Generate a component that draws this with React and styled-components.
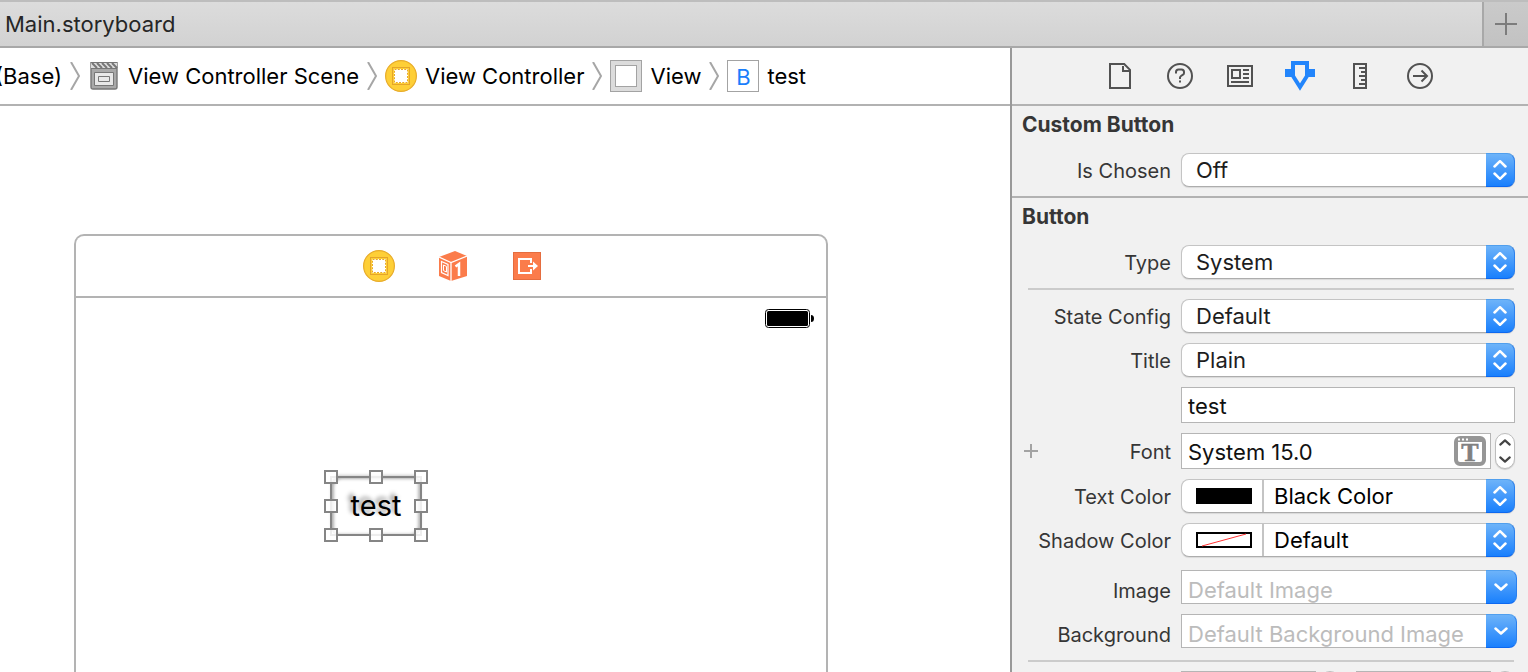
import React from "react";
import styled, { createGlobalStyle, css } from "styled-components";

const GlobalStyle = createGlobalStyle`
  *, *::before, *::after { box-sizing: border-box; }
  body { margin: 0; background: #fff; font-family: Inter, "Liberation Sans", sans-serif; color: #000; }
  button, input, select { font: inherit; color: inherit; margin: 0; }
  svg { display: block; }
`;

const Shell = styled.div`
  display: flex;
  flex-direction: column;
  height: 100vh;
  overflow: hidden;
`;

const TitleBar = styled.header`
  display: flex;
  flex: none;
  height: 48px;
  border-top: 2px solid #bdbdbd;
  border-bottom: 2px solid #a8a8a8;
  background: linear-gradient(#dcdcdc, #d2d2d2);
`;

const DocumentTitle = styled.h1`
  flex: 1;
  margin: 0;
  padding-left: 5px;
  font-size: 22px;
  font-weight: 400;
  line-height: 44px;
  color: #262626;
`;

const AddTabButton = styled.button`
  display: grid;
  place-items: center;
  width: 46px;
  padding: 0;
  border: 0;
  border-left: 2px solid #a8a8a8;
  background: linear-gradient(#cacaca, #c2c2c2);
`;

const Workspace = styled.div`
  display: flex;
  flex: 1;
  min-height: 0;
`;

const Editor = styled.main`
  display: flex;
  flex: 1;
  flex-direction: column;
  min-width: 0;
  overflow: hidden;
`;

const PathBar = styled.nav`
  display: flex;
  flex: none;
  align-items: center;
  gap: 8px;
  height: 58px;
  margin-left: -5px;
  border-bottom: 2px solid #b2b2b2;
  white-space: nowrap;
`;

const Crumb = styled.a`
  display: flex;
  align-items: center;
  gap: 8px;
  font-size: 22px;
  line-height: 28px;
  color: #000;
  text-decoration: none;
`;

const IconSlot = styled.span`
  display: grid;
  place-items: center;
  width: 32px;
  height: 32px;
`;

const ButtonBadge = styled.span`
  width: 32px;
  height: 32px;
  border: 1px solid #a3a3a3;
  font-size: 22px;
  line-height: 32px;
  text-align: center;
  color: #1a7efb;
`;

const Canvas = styled.section`
  display: flex;
  flex: 1;
  min-height: 0;
  padding: 128px 182px 0 74px;
`;

const Scene = styled.div`
  display: flex;
  flex: 1;
  flex-direction: column;
  border: 2px solid #b3b3b3;
  border-bottom: 0;
  border-radius: 10px 10px 0 0;
`;

const SceneDock = styled.div`
  display: flex;
  align-items: center;
  justify-content: center;
  gap: 42px;
  height: 62px;
  padding-left: 4px;
  border-bottom: 2px solid #b3b3b3;
`;

const SceneView = styled.div`
  position: relative;
  flex: 1;
  padding: 11px 12px;
`;

const StatusBar = styled.div`
  display: flex;
  justify-content: flex-end;
`;

const SelectedItem = styled.div`
  position: absolute;
  left: 255px;
  top: 179px;
  width: 90px;
  height: 58px;
  outline: 2px solid #858585;
  outline-offset: -1px;
`;

const CanvasButton = styled.button`
  width: 100%;
  height: 100%;
  padding: 0;
  border: 0;
  border-radius: 8px;
  background: #fff;
  box-shadow: inset 3px 2px 3px #b0b0b0, inset -3px -1px 3px #b8b8b8, 0 -2px 3px #ccc;
  font-size: 29px;
  line-height: 32px;
  text-shadow: -3px -3px 4px #999;
`;

const Handle = styled.span`
  position: absolute;
  left: ${(p) => p.$x};
  top: ${(p) => p.$y};
  width: 14px;
  height: 14px;
  margin: -7px;
  border: 2px solid #858585;
  background: rgba(255, 255, 255, 0.85);
`;

const Inspector = styled.aside`
  flex: none;
  width: 518px;
  border-left: 2px solid #999;
  background: #f1f1f1;
  overflow: hidden;
`;

const InspectorTabs = styled.div`
  display: flex;
  justify-content: center;
  height: 58px;
  border-bottom: 2px solid #b2b2b2;
`;

const TabButton = styled.button`
  display: grid;
  place-items: center;
  width: 60px;
  padding: 0;
  border: 0;
  background: none;
  color: ${(p) => (p.$active ? "#2285fb" : "#525252")};
`;

const Section = styled.section`
  display: flex;
  flex-direction: column;
  gap: 10px;
  padding: 7px 13px 9px 0;
  border-bottom: 2px solid #b2b2b2;
`;

const SectionTitle = styled.h2`
  margin: 0 0 6px;
  padding-left: 10px;
  font-size: 21px;
  font-weight: 700;
  line-height: 24px;
  color: #363636;
`;

const Divider = styled.hr`
  width: 486px;
  height: 2px;
  margin: -1px 0 -1px 16px;
  border: 0;
  background: #cbcbcb;
`;

const Row = styled.div`
  display: grid;
  grid-template-columns: 159px 1fr;
  column-gap: 10px;
  align-items: ${(p) => (p.$low ? "end" : "center")};
  margin: ${(p) => p.$margin || "0"};
`;

const LabelCell = styled.div`
  display: flex;
  align-items: center;
  justify-content: flex-end;
  padding-left: 12px;
`;

const Label = styled.label`
  padding-top: 1px;
  font-size: 20px;
  line-height: 26px;
  color: #363636;
  white-space: nowrap;
`;

const AddVariationButton = styled.button`
  margin-right: auto;
  padding: 0;
  border: 0;
  background: none;
`;

const PopUp = styled.div`
  position: relative;
  display: flex;
  height: 34px;
  border: 1px solid #c4c4c4;
  border-bottom-color: #adadad;
  border-radius: 8px;
  background: #fff;
  box-shadow: 0 1px 1px rgba(0, 0, 0, 0.1);
`;

const PopUpSelect = styled.select`
  flex: 1;
  min-width: 0;
  padding: 0 32px 0 ${(p) => (p.$divided ? "10px" : "14px")};
  border: 0;
  border-left: ${(p) => (p.$divided ? "2px solid #c4c4c4" : "0")};
  border-radius: ${(p) => (p.$divided ? "0" : "8px")};
  background: none;
  appearance: none;
  font-size: 22px;
  line-height: 28px;
  color: ${(p) => (p.$divided ? "#000" : "#1d1d1d")};
`;

const blueCap = css`
  display: grid;
  place-items: center;
  border: 1px solid #3b93f8;
  border-width: 1px 1px 1px 0;
  border-color: #509fee #2a80ee #0d68f0;
  border-radius: 0 8px 8px 0;
  background: linear-gradient(#6db3f9, #1a80fd);
`;

const PopUpCap = styled.span`
  ${blueCap}
  position: absolute;
  top: -1px;
  right: -1px;
  bottom: -1px;
  width: 29px;
  pointer-events: none;
`;

const ColorWell = styled.button`
  width: 80px;
  padding: 0 0 0 14px;
  border: 0;
  background: none;
`;

const Field = styled.input`
  width: 100%;
  min-width: 0;
  height: 36px;
  padding: 2px 6px 0;
  border: 1px solid #b5b5b5;
  border-radius: 0;
  background: #fff;
  font-size: 22px;
  line-height: 28px;
  color: #111;
`;

const FontControl = styled.div`
  display: flex;
  gap: 4px;
`;

const FontBox = styled.div`
  display: flex;
  flex: 1;
  align-items: center;
  min-width: 0;
  height: 36px;
  padding-right: 4px;
  border: 1px solid #b5b5b5;
  background: #fff;
`;

const FontField = styled(Field)`
  flex: 1;
  height: 34px;
  border: 0;
`;

const FontPanelButton = styled.button`
  padding: 0;
  border: 0;
  background: none;
`;

const Stepper = styled.div`
  display: flex;
  flex: none;
  flex-direction: column;
  width: 20px;
  height: 36px;
  border: 1px solid #bdbdbd;
  border-radius: 10px;
  background: #fff;
  box-shadow: 0 1px 1px rgba(0, 0, 0, 0.15);
`;

const StepButton = styled.button`
  display: grid;
  flex: 1;
  place-items: center;
  padding: 0;
  border: 0;
  background: none;
`;

const ComboBox = styled.div`
  display: flex;
  height: 34px;
  margin-right: -2px;
`;

const ComboField = styled(Field)`
  flex: 1;
  height: 34px;
  padding-top: 6px;
  border-right: 0;
  &::placeholder { color: #bcbcbc; opacity: 1; }
`;

const ComboButton = styled.button`
  ${blueCap}
  width: 31px;
  padding: 0;
`;

const PairControl = styled.div`
  display: grid;
  grid-template-columns: 1fr 1fr;
  column-gap: 16px;
`;

function Chevron() {
  return (
    <svg width="10" height="28" viewBox="0 0 10 28" fill="none" stroke="#a6a6a6" strokeWidth="2" aria-hidden="true">
      <path d="M1 0 9 14 1 28" />
    </svg>
  );
}

function SceneIcon() {
  return (
    <svg width="28" height="28" viewBox="0 0 28 28" fill="none" aria-hidden="true">
      <path d="M1 .5h26V25q0 2-2 2H3q-2 0-2-2Z" fill="#a9a9a9" stroke="#777" strokeWidth="1.4" />
      <path d="M1 1h26v5H1Z" fill="#ddd" />
      <path d="m2 1 5 5m0-5 5 5m0-5 5 5m0-5 5 5m0-5 5 5" stroke="#777" strokeWidth="2" />
      <path d="M1 6.5h26" stroke="#777" />
      <path d="M4.500 10.500h19v13h-19Z" fill="#e8e8e8" stroke="#777" />
      <path d="M8.500 14.500h11v5h-11Z" stroke="#777" />
    </svg>
  );
}

function ControllerIcon() {
  return (
    <svg width="32" height="32" viewBox="0 0 32 32" fill="none" aria-hidden="true">
      <circle cx="16" cy="16" r="15.400" fill="#fecf37" stroke="#e8ac2b" strokeWidth="1.200" />
      <rect x="7.500" y="7.500" width="17" height="17" stroke="#e5a52a" />
      <rect x="9" y="9" width="14" height="14" fill="#fff" />
      <rect x="9.500" y="9.500" width="13" height="13" stroke="#e8a92a" strokeDasharray="2 1.250" />
    </svg>
  );
}

function ViewIcon() {
  return (
    <svg width="32" height="32" viewBox="0 0 32 32" aria-hidden="true">
      <rect x=".5" y=".5" width="31" height="31" fill="#dcdcdc" stroke="#a3a3a3" />
      <rect x="5.500" y="5.500" width="21" height="21" fill="#fff" stroke="#a3a3a3" />
    </svg>
  );
}

function ResponderIcon() {
  return (
    <svg width="28" height="30" viewBox="0 0 28 30" fill="none" aria-hidden="true">
      <path d="M16 0 28 5v20l-16 5L0 25V6Z" fill="#fb7c4b" />
      <path d="m0 6 12 5.500L28 5M12 11.500V30" stroke="#fff" strokeWidth="1.300" />
      <path d="m2.500 10.500 6.500 3v11l-6.500-3Z" stroke="#fff" strokeWidth="1.200" />
      <path d="m4.500 14 3 1.400v5.600l-3-1.400Z" stroke="#fff" strokeWidth="1" />
      <path d="m16.500 15.500 3.500-2.500v12" stroke="#fff" strokeWidth="2.500" />
    </svg>
  );
}

function ExitIcon() {
  return (
    <svg width="28" height="28" viewBox="0 0 28 28" fill="none" aria-hidden="true">
      <rect x=".5" y=".5" width="27" height="27" fill="#fb7c4b" stroke="#e56d3f" />
      <path d="M18 11V7H6v14h12v-4" stroke="#fff" strokeWidth="2" />
      <path d="M15 14h7" stroke="#fff" strokeWidth="2" />
      <path d="m20 9.500 5 4.500-5 4.500Z" fill="#fff" />
    </svg>
  );
}

function BatteryIcon() {
  return (
    <svg width="49" height="19" viewBox="0 0 49 19" fill="none" role="img" aria-label="Battery full">
      <rect x=".5" y=".5" width="44" height="18" rx="3" stroke="#000" />
      <rect x="2" y="2" width="41" height="15" rx="1.500" fill="#000" />
      <path d="M46 6q3 0 3 3.500T46 13Z" fill="#000" />
    </svg>
  );
}

function PlusIcon({ size, color, stroke }) {
  return (
    <svg width={size} height={size} viewBox={`0 0 ${size} ${size}`} stroke={color} strokeWidth={stroke} aria-hidden="true">
      <path d={`M0 ${size / 2}h${size}M${size / 2} 0v${size}`} />
    </svg>
  );
}

const tabIcons = {
  File: <path d="M5 3h14.200L25 8.800V27H5ZM18 5v5h6" />,
  "Quick Help": (
    <>
      <circle cx="15" cy="15" r="12" />
      <path d="M11 12.500V11q0-2.500 2.500-2.500h3q2.500 0 2.500 2.500v1q0 1-1 1.700l-2 1.300q-1 .7-1 1.800V18M15 19.500v2" />
    </>
  ),
  Identity: (
    <path d="M3 5h24v20H3ZM7 9h8v8H7ZM18 9h6M18 13h6M18 17h6M6 21h18" />
  ),
  Attributes: (
    <>
      <path d="M8 2h14v13l-7 11-7-11Z" strokeWidth="4" />
      <path d="M0 8h7v8H0ZM23 8h7v8h-7Z" fill="currentColor" stroke="none" />
    </>
  ),
  Size: <path d="M9 3h12v24H9ZM14 7h6M16 11h4M14 15h6M16 19h4M14 23h6" />,
  Connections: (
    <>
      <circle cx="15" cy="15" r="12" />
      <path d="M8 15h13M16.500 9.500 22 15l-5.500 5.500" />
    </>
  ),
};

function InspectorIcon({ name }) {
  return (
    <svg width="30" height="30" viewBox="0 0 30 30" fill="none" stroke="currentColor" strokeWidth="2" aria-hidden="true">
      {tabIcons[name]}
    </svg>
  );
}

function UpDownIcon() {
  return (
    <svg width="14" height="20" viewBox="0 0 14 20" fill="none" stroke="#fff" strokeWidth="2.500" strokeLinecap="round" strokeLinejoin="round" aria-hidden="true">
      <path d="m1.500 6.500 5.500-5.300 5.500 5.300m-11 7 5.500 5.300 5.500-5.300" />
    </svg>
  );
}

function CaretIcon({ up, color, width = 14, height = 8 }) {
  return (
    <svg width={width} height={height} viewBox="0 0 14 8" fill="none" stroke={color} strokeWidth="2.500" strokeLinecap="round" strokeLinejoin="round" aria-hidden="true">
      <path d={up ? "M1.500 6.500 7 1.500l5.500 5" : "m1.500 1.500 5.500 5 5.500-5"} />
    </svg>
  );
}

function FontPanelIcon() {
  return (
    <svg width="32" height="30" viewBox="0 0 32 30" aria-hidden="true">
      <rect x="2" y="2" width="28" height="26" rx="4" fill="#fff" stroke="#969696" strokeWidth="4" />
      <path d="M2 2h28v4H2Z" fill="#969696" />
      <path d="M4 2.500h2v2H4ZM8 2.500h2v2H8ZM12 2.500h2v2h-2Z" fill="#fff" />
      <text x="16" y="25" textAnchor="middle" fontFamily="Liberation Serif, serif" fontWeight="700" fontSize="26" fill="#808080" stroke="#808080" strokeWidth=".6">T</text>
    </svg>
  );
}

function Swatch({ empty }) {
  return (
    <svg width="56" height="16" viewBox="0 0 56 16" aria-hidden="true">
      <rect x="1" y="1" width="54" height="14" fill={empty ? "#fff" : "#000"} stroke="#000" strokeWidth="2" />
      {empty && <path d="M6 14 50 2" stroke="#f33" strokeWidth="1" />}
    </svg>
  );
}

function StepperControl({ label }) {
  return (
    <Stepper>
      <StepButton type="button" aria-label={`Increase ${label}`}>
        <CaretIcon up color="#444" width={12} height={7} />
      </StepButton>
      <StepButton type="button" aria-label={`Decrease ${label}`}>
        <CaretIcon color="#444" width={12} height={7} />
      </StepButton>
    </Stepper>
  );
}

function PopUpRow({ id, label, value, well }) {
  return (
    <Row>
      <LabelCell>
        <Label htmlFor={id}>{label}</Label>
      </LabelCell>
      <PopUp>
        {well && (
          <ColorWell type="button" aria-label={`${label} well`}>
            <Swatch empty={well === "empty"} />
          </ColorWell>
        )}
        <PopUpSelect id={id} $divided={Boolean(well)} defaultValue={value}>
          <option>{value}</option>
        </PopUpSelect>
        <PopUpCap>
          <UpDownIcon />
        </PopUpCap>
      </PopUp>
    </Row>
  );
}

function ComboRow({ id, label, placeholder, margin }) {
  return (
    <Row $low $margin={margin}>
      <LabelCell>
        <Label htmlFor={id}>{label}</Label>
      </LabelCell>
      <ComboBox>
        <ComboField id={id} placeholder={placeholder} />
        <ComboButton type="button" aria-label={`Choose ${label}`}>
          <CaretIcon color="#fff" />
        </ComboButton>
      </ComboBox>
    </Row>
  );
}

const crumbs = [
  { text: "(Base)" },
  { text: "View Controller Scene", icon: <SceneIcon /> },
  { text: "View Controller", icon: <ControllerIcon /> },
  { text: "View", icon: <ViewIcon /> },
  { text: "test", icon: <ButtonBadge>B</ButtonBadge> },
];

const handles = [
  ["0%", "0%"], ["50%", "0%"], ["100%", "0%"],
  ["0%", "50%"], ["100%", "50%"],
  ["0%", "100%"], ["50%", "100%"], ["100%", "100%"],
];

export default function App() {
  return (
    <Shell>
      <GlobalStyle />
      <TitleBar>
        <DocumentTitle>Main.storyboard</DocumentTitle>
        <AddTabButton type="button" aria-label="New tab">
          <PlusIcon size={22} color="#7c7c7c" stroke={2} />
        </AddTabButton>
      </TitleBar>
      <Workspace>
        <Editor>
          <PathBar aria-label="Document path">
            {crumbs.map((crumb, i) => (
              <React.Fragment key={crumb.text}>
                {i > 0 && <Chevron />}
                <Crumb href="#">
                  {crumb.icon && <IconSlot>{crumb.icon}</IconSlot>}
                  {crumb.text}
                </Crumb>
              </React.Fragment>
            ))}
          </PathBar>
          <Canvas>
            <Scene>
              <SceneDock>
                <IconSlot><ControllerIcon /></IconSlot>
                <IconSlot><ResponderIcon /></IconSlot>
                <IconSlot><ExitIcon /></IconSlot>
              </SceneDock>
              <SceneView>
                <StatusBar><BatteryIcon /></StatusBar>
                <SelectedItem>
                  <CanvasButton type="button">test</CanvasButton>
                  {handles.map(([x, y]) => (
                    <Handle key={x + y} $x={x} $y={y} />
                  ))}
                </SelectedItem>
              </SceneView>
            </Scene>
          </Canvas>
        </Editor>
        <Inspector>
          <InspectorTabs>
            {Object.keys(tabIcons).map((name) => (
              <TabButton key={name} type="button" aria-label={`${name} inspector`} $active={name === "Attributes"}>
                <InspectorIcon name={name} />
              </TabButton>
            ))}
          </InspectorTabs>
          <Section>
            <SectionTitle>Custom Button</SectionTitle>
            <PopUpRow id="chosen" label="Is Chosen" value="Off" />
          </Section>
          <Section>
            <SectionTitle>Button</SectionTitle>
            <PopUpRow id="type" label="Type" value="System" />
            <Divider />
            <PopUpRow id="state" label="State Config" value="Default" />
            <PopUpRow id="title" label="Title" value="Plain" />
            <Row>
              <span />
              <Field aria-label="Title text" defaultValue="test" />
            </Row>
            <Row>
              <LabelCell>
                <AddVariationButton type="button" aria-label="Add font variation">
                  <PlusIcon size={14} color="#a3a3a3" stroke={2} />
                </AddVariationButton>
                <Label htmlFor="font">Font</Label>
              </LabelCell>
              <FontControl>
                <FontBox>
                  <FontField id="font" defaultValue="System 15.0" />
                  <FontPanelButton type="button" aria-label="Font panel">
                    <FontPanelIcon />
                  </FontPanelButton>
                </FontBox>
                <StepperControl label="font size" />
              </FontControl>
            </Row>
            <PopUpRow id="textColor" label="Text Color" value="Black Color" well="black" />
            <PopUpRow id="shadowColor" label="Shadow Color" value="Default" well="empty" />
            <ComboRow id="image" label="Image" placeholder="Default Image" margin="3px 0 0" />
            <ComboRow id="background" label="Background" placeholder="Default Background Image" margin="0 0 3px" />
            <Divider />
            <Row>
              <span />
              <PairControl>
                <FontControl>
                  <Field aria-label="Shadow offset width" />
                  <StepperControl label="shadow offset width" />
                </FontControl>
                <FontControl>
                  <Field aria-label="Shadow offset height" />
                  <StepperControl label="shadow offset height" />
                </FontControl>
              </PairControl>
            </Row>
          </Section>
        </Inspector>
      </Workspace>
    </Shell>
  );
}
